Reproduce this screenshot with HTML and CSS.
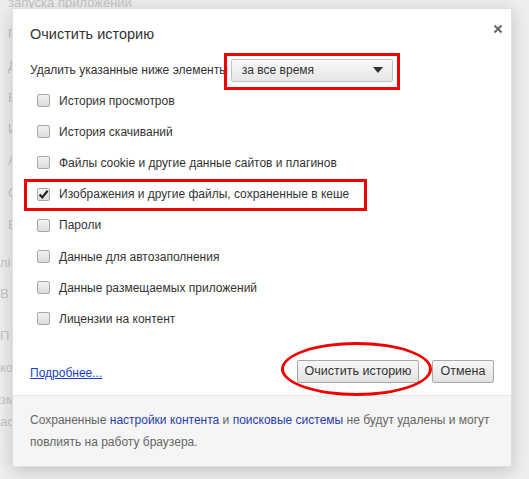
FILE: index.html
```html
<!DOCTYPE html>
<html lang="ru">
<head>
<meta charset="utf-8">
<title>Очистить историю</title>
<link rel="stylesheet" href="styles.css">
</head>
<body>
<div class="page">
  <div class="bg-top">запуска приложений</div>
  <div class="bg-col">
    <div class="bg-list">
      <div class="bg-item">П</div>
      <div class="bg-item">Д</div>
      <div class="bg-item">В</div>
      <div class="bg-item">И</div>
      <div class="bg-item">А</div>
      <div class="bg-item">С</div>
      <div class="bg-item">В</div>
    </div>
    <div class="bg-list bg-shift">
      <div class="bg-item wide">лі</div>
      <div class="bg-item">В</div>
      <div class="bg-item gap">П</div>
      <div class="bg-item wide">ко</div>
      <div class="bg-item wide small">зм</div>
      <div class="bg-item wide">асц</div>
    </div>
  </div>
</div>

<div class="overlay">
  <div class="dialog">
    <div class="dlg-head">
      <h1 class="dlg-title">Очистить историю</h1>
      <span class="dlg-close">
        <svg width="10" height="10" viewBox="0 0 10 10"><path d="M1.5 1.5 L8.5 8.5 M8.5 1.5 L1.5 8.5" stroke="#666" stroke-width="2" fill="none"/></svg>
      </span>
    </div>
    <div class="dlg-body">
      <div class="range-row">
        <span class="range-label">Удалить указанные ниже элементы</span>
        <div class="select mark-box">
          <span>за все время</span>
          <span class="select-arrow"></span>
        </div>
      </div>
      <ul class="checks">
        <li class="check-row"><span class="cb"></span><span>История просмотров</span></li>
        <li class="check-row"><span class="cb"></span><span>История скачиваний</span></li>
        <li class="check-row"><span class="cb"></span><span>Файлы cookie и другие данные сайтов и плагинов</span></li>
        <li class="check-row mark-row"><span class="cb checked"><svg width="11" height="11" viewBox="0 0 11 11"><path d="M1.6 5.6 L4.3 8.4 L9.6 1.8" stroke="#222" stroke-width="2.2" fill="none"/></svg></span><span>Изображения и другие файлы, сохраненные в кеше</span></li>
        <li class="check-row"><span class="cb"></span><span>Пароли</span></li>
        <li class="check-row"><span class="cb"></span><span>Данные для автозаполнения</span></li>
        <li class="check-row"><span class="cb"></span><span>Данные размещаемых приложений</span></li>
        <li class="check-row"><span class="cb"></span><span>Лицензии на контент</span></li>
      </ul>
      <div class="actions">
        <a class="more" href="#">Подробнее...</a>
        <div class="buttons">
          <button class="btn btn-clear mark-ellipse">Очистить историю</button>
          <button class="btn btn-cancel">Отмена</button>
        </div>
      </div>
    </div>
    <div class="dlg-foot">
      Сохраненные <a href="#">настройки контента</a> и <a href="#">поисковые системы</a> не будут удалены и могут повлиять на работу браузера.
    </div>
  </div>
</div>
</body>
</html>
```

FILE: styles.css
```css
* { box-sizing: border-box; }
html, body { margin: 0; padding: 0; }
body {
  width: 529px;
  height: 479px;
  overflow: hidden;
  background: #eeeeee;
  font-family: "Liberation Sans", Arial, sans-serif;
  font-size: 12px;
  color: #333;
  position: relative;
}

/* faded settings page behind the dialog */
.page {
  color: #c4c4c4;
  font-size: 13px;
}
.bg-top {
  height: 12px;
  line-height: 12px;
  padding-left: 8px;
  margin-top: -3px;
}
.bg-col {
  width: 12px;
  overflow: hidden;
  white-space: nowrap;
}
.bg-list { padding-top: 15px; padding-left: 8px; }
.bg-item { height: 31.8px; line-height: 20px; }
.bg-shift { padding-top: 6px; padding-left: 0; }
.bg-item.gap { margin-top: 10px; }
.bg-item.small { height: 22px; }

.overlay {
  position: absolute;
  left: 0; top: 0;
  width: 529px; height: 479px;
}
.dialog {
  position: absolute;
  left: 12px;
  top: 8px;
  width: 500px;
  height: 459px;
  background: #fff;
  border: 1px solid #e0e0e0;
  box-shadow: 0 4px 16px rgba(0,0,0,0.18);
  display: flex;
  flex-direction: column;
}

.dlg-head {
  display: flex;
  justify-content: space-between;
  align-items: flex-start;
  padding: 15px 8px 0 17px;
  height: 45px;
}
.dlg-title {
  margin: 0;
  font-weight: normal;
  font-size: 14.5px;
  line-height: 20px;
  color: #333;
}
.dlg-close {
  display: block;
  width: 10px;
  height: 10px;
}
.dlg-close svg { display: block; }

.dlg-body {
  flex: 1;
  padding: 0 17px 0 17px;
  display: flex;
  flex-direction: column;
}
.range-row {
  display: flex;
  align-items: center;
  height: 30px;
  margin-top: 1px;
}
.range-label { margin-right: 3px; }
.select {
  position: relative;
  width: 162px;
  height: 23px;
  border: 1px solid #c3c3c3;
  border-radius: 2px;
  background: linear-gradient(#f8f8f8, #e6e6e6);
  display: flex;
  align-items: center;
  justify-content: space-between;
  padding: 0 9px 0 10px;
  color: #333;
}
.select-arrow {
  width: 0; height: 0;
  border-left: 5px solid transparent;
  border-right: 5px solid transparent;
  border-top: 6px solid #333;
}
.mark-box::after {
  content: "";
  position: absolute;
  left: -8px; right: -8px;
  top: -7px; bottom: -9px;
  border: 3px solid #f20000;
}

.checks {
  list-style: none;
  margin: 0;
  padding: 0;
}
.check-row {
  position: relative;
  display: flex;
  align-items: center;
  height: 31.2px;
  padding-left: 7px;
  white-space: nowrap;
}
.cb {
  width: 13px;
  height: 13px;
  border: 1px solid #a8a8a8;
  border-radius: 2px;
  background: linear-gradient(#f2f2f2, #dcdcdc);
  margin-right: 9px;
  display: flex;
  align-items: center;
  justify-content: center;
  flex: none;
}
.cb svg { display: block; }
.mark-row::after {
  content: "";
  position: absolute;
  left: -6px;
  width: 337px;
  top: 0px;
  bottom: -1px;
  border: 3px solid #f20000;
}

.actions {
  display: flex;
  justify-content: space-between;
  align-items: center;
  margin-top: 25px;
}
.more {
  color: #1a3ec8;
  text-decoration: underline;
  margin-top: 3px;
}
.buttons { display: flex; gap: 13px; }
.btn {
  position: relative;
  font-family: inherit;
  font-size: 12.5px;
  color: #333;
  height: 23px;
  padding: 0 6px;
  border: 1px solid #a9a9a9;
  border-radius: 2px;
  background: linear-gradient(#f8f8f8, #e2e2e2);
  white-space: nowrap;
}
.btn-clear { width: 122px; }
.btn-cancel { width: 62px; }
.mark-ellipse::after {
  content: "";
  position: absolute;
  left: -17px; right: -14px;
  top: -19px; bottom: -14px;
  border: 3px solid #f20000;
  border-radius: 50%;
}

.dlg-foot {
  height: 71px;
  background: #f5f5f5;
  border-top: 1px solid #e6e6e6;
  padding: 13px 17px 0 17px;
  line-height: 22px;
  color: #666;
}
.dlg-foot a {
  color: #2940a8;
  text-decoration: none;
}
```
